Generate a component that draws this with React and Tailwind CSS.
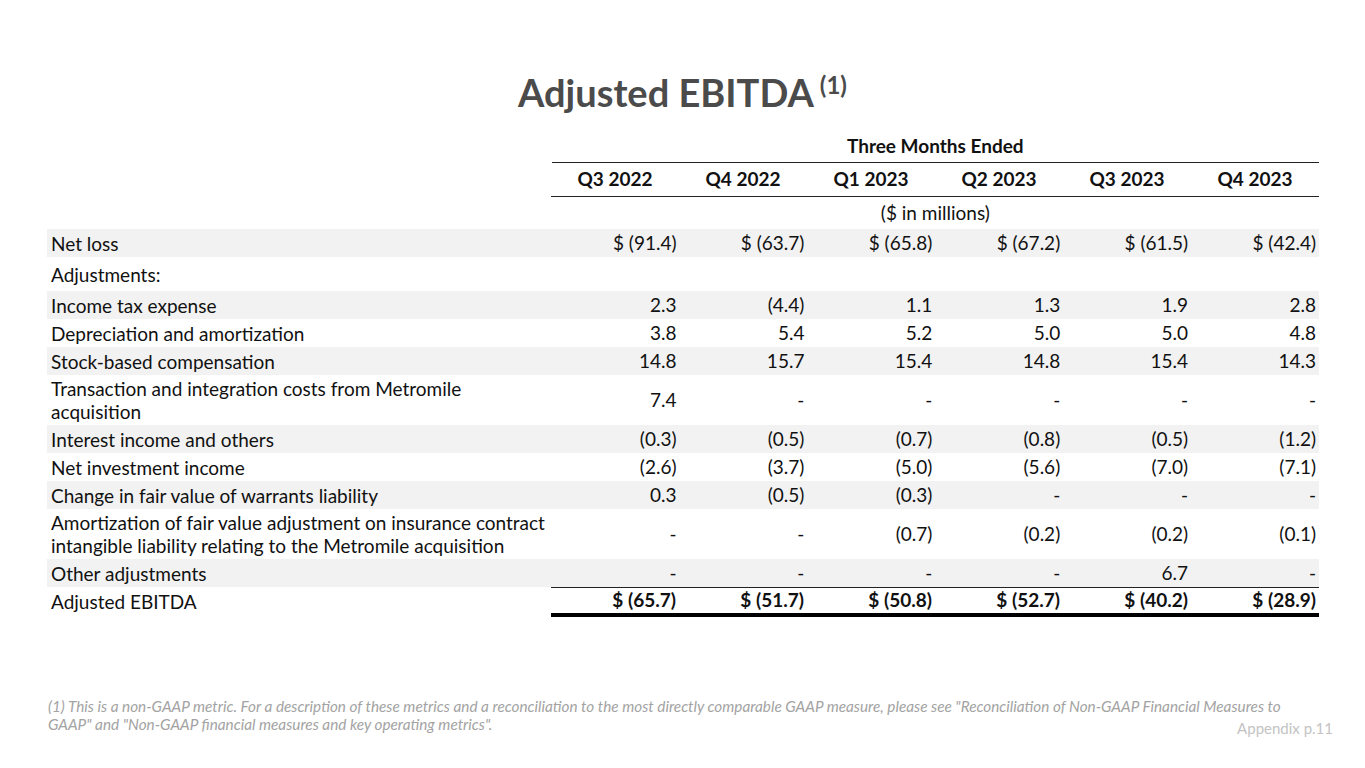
const quarters = ["Q3 2022", "Q4 2022", "Q1 2023", "Q2 2023", "Q3 2023", "Q4 2023"];

const rows = [
  { label: "Net loss", vals: ["$ (91.4)", "$ (63.7)", "$ (65.8)", "$ (67.2)", "$ (61.5)", "$ (42.4)"], shade: true, h: "h-[28px]" },
  { label: "Adjustments:", vals: ["", "", "", "", "", ""], h: "h-[34px]" },
  { label: "Income tax expense", vals: ["2.3", "(4.4)", "1.1", "1.3", "1.9", "2.8"], shade: true, h: "h-[28px]" },
  { label: "Depreciation and amortization", vals: ["3.8", "5.4", "5.2", "5.0", "5.0", "4.8"], h: "h-[28px]" },
  { label: "Stock-based compensation", vals: ["14.8", "15.7", "15.4", "14.8", "15.4", "14.3"], shade: true, h: "h-[28px]" },
  { label: "Transaction and integration costs from Metromile acquisition", vals: ["7.4", "-", "-", "-", "-", "-"], h: "h-[50px]", wrap: "w-[430px]" },
  { label: "Interest income and others", vals: ["(0.3)", "(0.5)", "(0.7)", "(0.8)", "(0.5)", "(1.2)"], shade: true, h: "h-[28px]" },
  { label: "Net investment income", vals: ["(2.6)", "(3.7)", "(5.0)", "(5.6)", "(7.0)", "(7.1)"], h: "h-[28px]" },
  { label: "Change in fair value of warrants liability", vals: ["0.3", "(0.5)", "(0.3)", "-", "-", "-"], shade: true, h: "h-[28px]" },
  { label: "Amortization of fair value adjustment on insurance contract intangible liability relating to the Metromile acquisition", vals: ["-", "-", "(0.7)", "(0.2)", "(0.2)", "(0.1)"], h: "h-[50px]", wrap: "w-[500px]" },
  { label: "Other adjustments", vals: ["-", "-", "-", "-", "6.7", "-"], shade: true, h: "h-[28px]" },
];

const totals = ["$ (65.7)", "$ (51.7)", "$ (50.8)", "$ (52.7)", "$ (40.2)", "$ (28.9)"];

const App = () => {
  return (
    <div className="w-[1365px] h-[768px] bg-white flex flex-col font-['Lato',sans-serif] text-[#111]">
      {/* Title */}
      <div className="pt-[62px] h-[130px] flex justify-center">
        <h1 className="text-[38px] font-bold text-[#4b4b4b] leading-[46px]">
          Adjusted EBITDA
          <span className="text-[24px] align-[13px] ml-[6px]">(1)</span>
        </h1>
      </div>

      {/* Table */}
      <div className="pl-[47px] w-[1319px] text-[19px]">
        {/* header */}
        <div className="flex h-[33px]">
          <div className="w-[505px]" />
          <div className="w-[768px] flex items-center justify-center font-bold border-b-[1.5px] border-[#222]">
            Three Months Ended
          </div>
        </div>
        <div className="flex h-[34px]">
          <div className="w-[505px]" />
          <div className="w-[768px] flex border-b-[1.5px] border-[#222]">
            {quarters.map((q) => (
              <div key={q} className="w-[128px] flex items-center justify-center font-bold">
                {q}
              </div>
            ))}
          </div>
        </div>
        <div className="flex h-[32px]">
          <div className="w-[505px]" />
          <div className="w-[768px] flex items-center justify-center">($ in millions)</div>
        </div>

        {/* body */}
        {rows.map((r) => (
          <div key={r.label} className={`flex ${r.h} ${r.shade ? "bg-[#f2f2f2]" : ""}`}>
            <div className="w-[505px] pl-[4px] flex items-center leading-[23px]">
              <span className={r.wrap}>{r.label}</span>
            </div>
            {r.vals.map((v, i) => (
              <div key={i} className="w-[128px] pr-[3px] flex items-center justify-end">
                {v}
              </div>
            ))}
          </div>
        ))}

        {/* total */}
        <div className="flex h-[30px]">
          <div className="w-[505px] pl-[4px] flex items-center">Adjusted EBITDA</div>
          <div className="w-[768px] flex border-t-[1.5px] border-[#222] border-b-[4px] border-b-black">
            {totals.map((v, i) => (
              <div key={i} className="w-[128px] pr-[3px] flex items-center justify-end font-bold">
                {v}
              </div>
            ))}
          </div>
        </div>
      </div>

      {/* Footer */}
      <div className="mt-auto pb-[31px] pl-[48px] pr-[32px] flex flex-col">
        <p className="italic text-[15.3px] leading-[18px] text-[#a3a3a3] whitespace-nowrap">
          (1) This is a non-GAAP metric. For a description of these metrics and a reconciliation to the most directly comparable GAAP measure, please see "Reconciliation of Non-GAAP Financial Measures to
          <br />
          GAAP" and "Non-GAAP financial measures and key operating metrics".
        </p>
        <span className="self-end -mt-[14px] text-[15px] leading-[18px] text-[#c3c3c3] whitespace-nowrap">Appendix p.11</span>
      </div>
    </div>
  );
};

export default App;
